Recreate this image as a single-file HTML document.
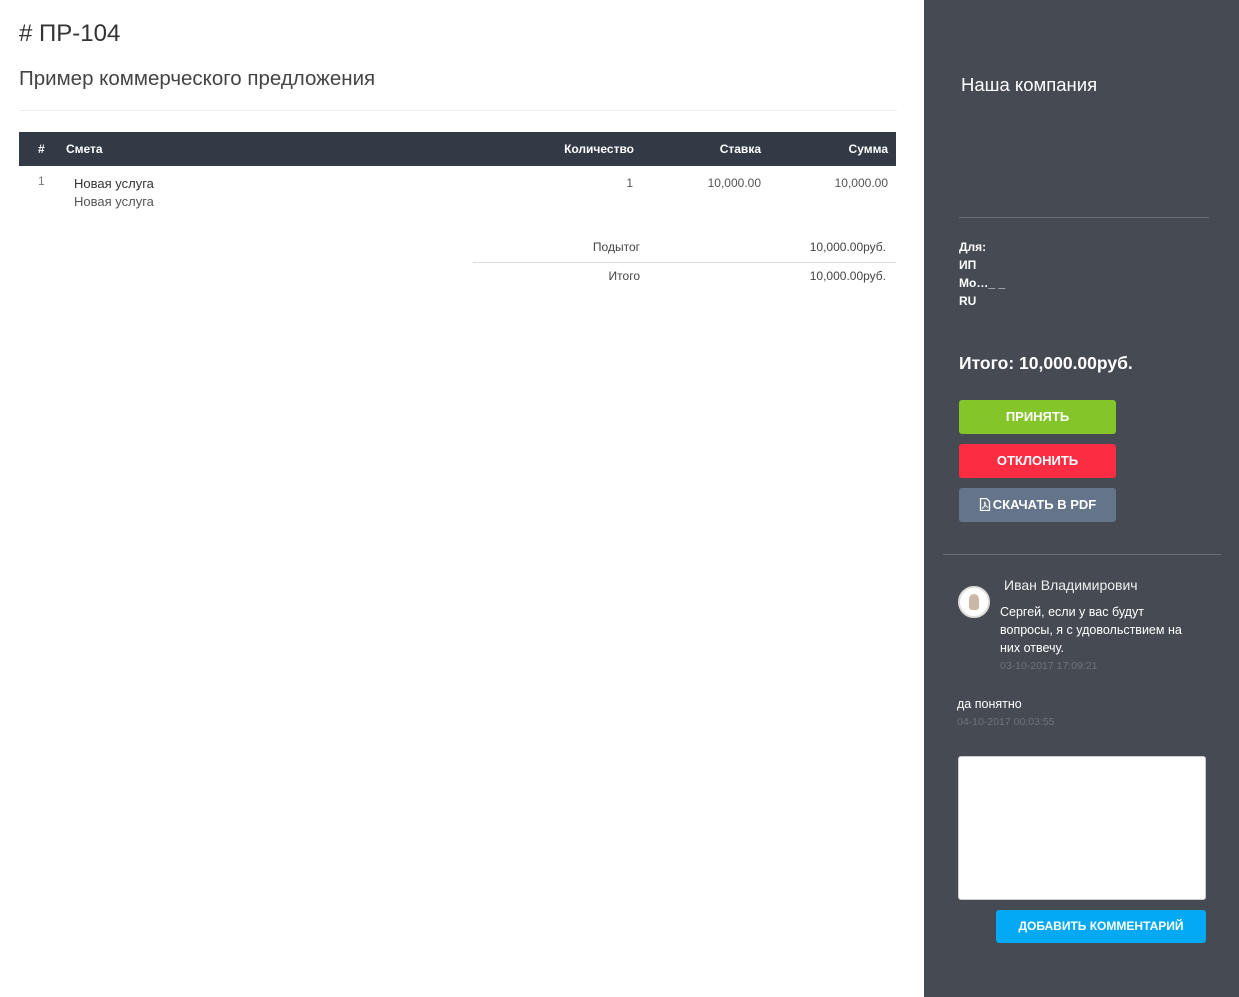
<!DOCTYPE html>
<html><head><meta charset="utf-8"><style>
*{margin:0;padding:0;box-sizing:border-box}
body{width:1239px;height:997px;background:#fff;font-family:"Liberation Sans",sans-serif;position:relative;overflow:hidden;color:#333}
.a{position:absolute;white-space:nowrap}
.r{position:absolute;white-space:nowrap;text-align:right}
.side{position:absolute;left:924px;top:0;width:315px;height:997px;background:#464b53}
.w{color:#fff}
.btn{position:absolute;left:959px;width:157px;height:34px;border-radius:3px;color:#fff;font-size:13px;font-weight:bold;text-align:center;line-height:34px}
</style></head><body>
<div class="a" style="left:19px;top:20px;font-size:24px;color:#333">#&nbsp;ПР-104</div>
<div class="a" style="left:19px;top:67px;font-size:20.5px;color:#444">Пример коммерческого предложения</div>
<div class="a" style="left:19px;top:110px;width:878px;height:1px;background:#eee"></div>
<div class="a" style="left:19px;top:132px;width:877px;height:34px;background:#323a45"></div>
<div class="a w" style="left:38px;top:142px;font-size:12px;font-weight:bold">#</div>
<div class="a w" style="left:66px;top:142px;font-size:12px;font-weight:bold">Смета</div>
<div class="r w" style="right:605px;top:142px;font-size:12px;font-weight:bold">Количество</div>
<div class="r w" style="right:478px;top:142px;font-size:12px;font-weight:bold">Ставка</div>
<div class="r w" style="right:351px;top:142px;font-size:12px;font-weight:bold">Сумма</div>
<div class="a" style="left:38px;top:174px;font-size:12px;color:#777">1</div>
<div class="a" style="left:74px;top:176px;font-size:13px;color:#333">Новая услуга</div>
<div class="a" style="left:74px;top:194px;font-size:13px;color:#555">Новая услуга</div>
<div class="r" style="right:606px;top:176px;font-size:12px;color:#555">1</div>
<div class="r" style="right:478px;top:176px;font-size:12px;color:#555">10,000.00</div>
<div class="r" style="right:351px;top:176px;font-size:12px;color:#555">10,000.00</div>
<div class="r" style="right:599px;top:240px;font-size:12px;color:#444">Подытог</div>
<div class="r" style="right:353px;top:240px;font-size:12px;color:#444">10,000.00руб.</div>
<div class="a" style="left:473px;top:262px;width:423px;height:1px;background:#ddd"></div>
<div class="r" style="right:599px;top:269px;font-size:12px;color:#444">Итого</div>
<div class="r" style="right:353px;top:269px;font-size:12px;color:#444">10,000.00руб.</div>

<div class="side"></div>
<div class="a w" style="left:961px;top:74px;font-size:18.5px">Наша компания</div>
<div class="a" style="left:959px;top:217px;width:250px;height:1px;background:#6a6f77"></div>
<div class="a w" style="left:959px;top:238px;font-size:12px;font-weight:bold;line-height:18px">Для:<br>ИП<br>Мо…_ _<br>RU</div>
<div class="a w" style="left:959px;top:353px;font-size:17.5px;font-weight:bold">Итого: 10,000.00руб.</div>
<div class="btn" style="top:400px;background:#84c529">ПРИНЯТЬ</div>
<div class="btn" style="top:444px;background:#fc2d42">ОТКЛОНИТЬ</div>
<div class="btn" style="top:488px;background:#64748b"><svg width="12" height="13" viewBox="0 0 12 13" style="vertical-align:-2px;margin-right:2px"><path d="M1.5 .5h6l3 3v9h-9z" fill="none" stroke="#fff" stroke-width="1.3"/><path d="M3 10.5c2-1 4-4 3-6s-1 3 3 5" fill="none" stroke="#fff" stroke-width="1"/></svg>СКАЧАТЬ В PDF</div>
<div class="a" style="left:943px;top:554px;width:278px;height:1px;background:#6a6f77"></div>
<div class="a" style="left:958px;top:586px;width:32px;height:32px;border-radius:50%;background:#fff;border:2px solid #ddd"><div style="margin:6px auto 0;width:10px;height:16px;border-radius:5px 5px 3px 3px;background:#c9b8a4"></div></div>
<div class="a w" style="left:1004px;top:577px;font-size:14px;color:#eee">Иван Владимирович</div>
<div class="a w" style="left:1000px;top:603px;font-size:12.5px;line-height:18px">Сергей, если у вас будут<br>вопросы, я с удовольствием на<br>них отвечу.</div>
<div class="a" style="left:1000px;top:660px;font-size:10.5px;color:#6e737a">03-10-2017 17:09:21</div>
<div class="a w" style="left:957px;top:697px;font-size:12.5px">да понятно</div>
<div class="a" style="left:957px;top:716px;font-size:10.5px;color:#6e737a">04-10-2017 00:03:55</div>
<div class="a" style="left:958px;top:756px;width:248px;height:144px;background:#fff;border:1px solid #ccc;border-radius:3px"></div>
<div class="btn" style="left:996px;top:910px;width:210px;height:33px;line-height:33px;background:#03a9f4;font-size:12px">ДОБАВИТЬ КОММЕНТАРИЙ</div>
</body></html>
